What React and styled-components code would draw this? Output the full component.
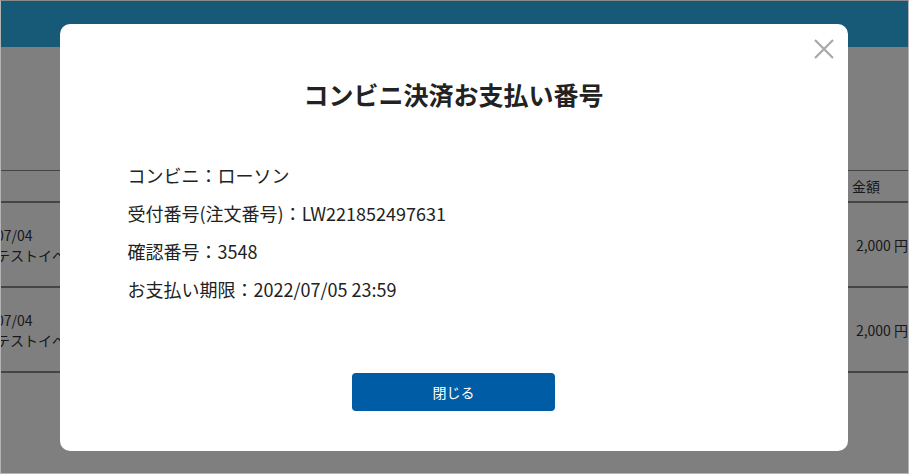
import React from 'react';
import styled, { createGlobalStyle } from 'styled-components';

const GlobalStyle = createGlobalStyle`
  html, body {
    margin: 0;
    padding: 0;
  }
  body {
    font-family: "Noto Sans CJK JP", "Noto Sans", sans-serif;
    color: #333;
  }
`;

const Page = styled.div`
  position: relative;
  width: 909px;
  height: 474px;
  box-sizing: border-box;
  border: 1px solid #b4b4b4;
  border-top-color: #8a8a8a;
  background: #fff;
  overflow: hidden;
`;

const Header = styled.div`
  height: 46px;
  background: #2cb4f0;
`;

const Table = styled.table`
  width: 100%;
  margin-top: 123px;
  border-collapse: collapse;
  font-size: 14px;
  color: #333;
`;

const Th = styled.th`
  height: 30px;
  padding: 0 0 0 4px;
  text-align: left;
  font-weight: 400;
  border-top: 1px solid #888;
  border-bottom: 2px solid #888;
  font-size: 14px;
`;

const Td = styled.td`
  height: 83px;
  padding: 0;
  border-bottom: 2px solid #888;
  text-align: ${p => (p.$right ? 'right' : 'left')};
  line-height: 20px;
  vertical-align: middle;
`;

const DateCell = styled.div`
  margin-left: -5px;
  white-space: nowrap;
`;

const Overlay = styled.div`
  position: absolute;
  inset: 0;
  padding-right: 2px;
  background: rgba(0, 0, 0, 0.5);
  display: flex;
  align-items: center;
  justify-content: center;
`;

const Modal = styled.div`
  position: relative;
  width: 788px;
  height: 427px;
  box-sizing: border-box;
  background: #fff;
  border-radius: 10px;
  padding: 52px 68px 0;
  display: flex;
  flex-direction: column;
`;

const CloseButton = styled.button`
  position: absolute;
  top: 13px;
  right: 12px;
  width: 24px;
  height: 24px;
  padding: 0;
  border: none;
  background: transparent;
  cursor: pointer;
`;

const Title = styled.h2`
  margin: 0;
  text-align: center;
  font-size: 25px;
  font-weight: 700;
  line-height: 36px;
  color: #222;
`;

const InfoList = styled.div`
  margin-top: 44px;
  display: flex;
  flex-direction: column;
`;

const InfoRow = styled.div`
  font-size: 18px;
  line-height: 38px;
  color: #222;
`;

const Footer = styled.div`
  margin-top: auto;
  margin-bottom: 40px;
  display: flex;
  justify-content: center;
`;

const PrimaryButton = styled.button`
  width: 203px;
  height: 38px;
  border: none;
  border-radius: 4px;
  background: #005ca4;
  color: #fff;
  font-family: inherit;
  font-size: 14px;
`;

const rows = [
  { date: '07/04', name: 'テストイベント', price: '2,000 円' },
  { date: '07/04', name: 'テストイベント', price: '2,000 円' },
];

const info = [
  'コンビニ：ローソン',
  '受付番号(注文番号)：LW221852497631',
  '確認番号：3548',
  'お支払い期限：2022/07/05 23:59',
];

const App = () => (
  <>
    <GlobalStyle />
    <Page>
      <Header />
      <Table>
        <tbody>
          <tr>
            <Th style={{ width: '60px' }}></Th>
            <Th></Th>
            <Th style={{ width: '56px' }}>金額</Th>
          </tr>
          {rows.map((r, i) => (
            <tr key={i}>
              <Td>
                <DateCell>{r.date}<br />{r.name}</DateCell>
              </Td>
              <Td></Td>
              <Td $right>{r.price}</Td>
            </tr>
          ))}
        </tbody>
      </Table>
      <Overlay>
        <Modal>
          <CloseButton aria-label="close">
            <svg width="24" height="24" viewBox="0 0 24 24">
              <path d="M3 3 L21 21 M21 3 L3 21" stroke="#a8a8a8" strokeWidth="2.2" />
            </svg>
          </CloseButton>
          <Title>コンビニ決済お支払い番号</Title>
          <InfoList>
            {info.map(t => (
              <InfoRow key={t}>{t}</InfoRow>
            ))}
          </InfoList>
          <Footer>
            <PrimaryButton>閉じる</PrimaryButton>
          </Footer>
        </Modal>
      </Overlay>
    </Page>
  </>
);

export default App;
